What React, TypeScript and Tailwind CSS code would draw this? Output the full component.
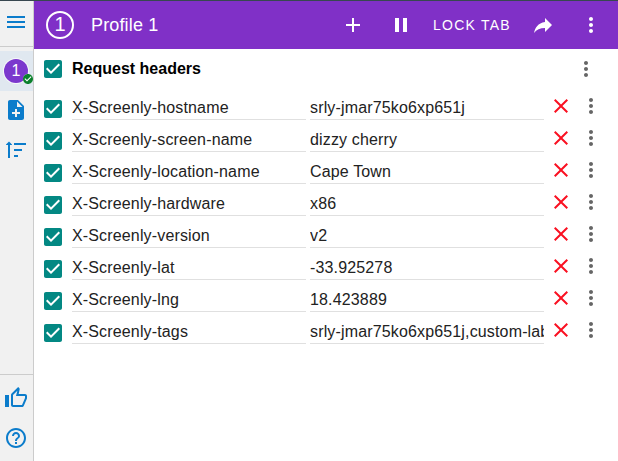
import React from 'react';

const paths = {
  menu: 'M3 18h18v-2H3v2zm0-5h18v-2H3v2zm0-7v2h18V6H3z',
  noteAdd:
    'M14 2H6c-1.1 0-1.99.9-1.99 2L4 20c0 1.1.89 2 1.99 2H18c1.1 0 2-.9 2-2V8l-6-6zm2 14h-3v3h-2v-3H8v-2h3v-3h2v3h3v2zm-3-7V3.5L18.5 9H13z',
  sort: 'M6 7v13H4V7H2v-.5L5 3.5l3 3V7H6zM10 5h12v2H10V5zm0 6h8v2h-8v-2zm0 6h4v2h-4v-2z',
  thumb:
    'M9 21h9c.83 0 1.54-.5 1.84-1.22l3.02-7.05c.09-.23.14-.47.14-.73v-2c0-1.1-.9-2-2-2h-6.31l.95-4.57.03-.32c0-.41-.17-.79-.44-1.06L14.17 1 7.58 7.59C7.22 7.95 7 8.45 7 9v10c0 1.1.9 2 2 2zM9 9l4.34-4.34L12 10h9v2l-3 7H9V9zM1 9h4v12H1z',
  help: 'M11 18h2v-2h-2v2zm1-16C6.48 2 2 6.48 2 12s4.48 10 10 10 10-4.48 10-10S17.52 2 12 2zm0 18c-4.41 0-8-3.59-8-8s3.59-8 8-8 8 3.59 8 8-3.59 8-8 8zm0-14c-2.21 0-4 1.79-4 4h2c0-1.1.9-2 2-2s2 .9 2 2c0 2-3 1.75-3 5h2c0-2.25 3-2.5 3-5 0-2.21-1.79-4-4-4z',
  add: 'M19 13h-6v6h-2v-6H5v-2h6V5h2v6h6v2z',
  pause: 'M6 19h4V5H6v14zm8-14v14h4V5h-4z',
  share: 'M21 12l-7-7v4C7 10 4 15 3 20c2.5-3.5 6-5.1 11-5.1V19l7-7z',
  more: 'M12 8c1.1 0 2-.9 2-2s-.9-2-2-2-2 .9-2 2 .9 2 2 2zm0 2c-1.1 0-2 .9-2 2s.9 2 2 2 2-.9 2-2-.9-2-2-2zm0 6c-1.1 0-2 .9-2 2s.9 2 2 2 2-.9 2-2-.9-2-2-2z',
  close:
    'M19 6.41L17.59 5 12 10.59 6.41 5 5 6.41 10.59 12 5 17.59 6.41 19 12 13.41 17.59 19 19 17.59 13.41 12z',
  checkBox:
    'M19 3H5c-1.11 0-2 .9-2 2v14c0 1.1.89 2 2 2h14c1.11 0 2-.9 2-2V5c0-1.1-.89-2-2-2zm-9 14l-5-5 1.41-1.41L10 14.17l7.59-7.59L19 8l-9 9z',
  checkCircle:
    'M12 2C6.48 2 2 6.48 2 12s4.48 10 10 10 10-4.48 10-10S17.52 2 12 2zm-2 15l-5-5 1.41-1.41L10 14.17l7.59-7.59L19 8l-9 9z',
};

function Icon({ name, className = '' }: { name: keyof typeof paths; className?: string }) {
  return (
    <svg viewBox="0 0 24 24" fill="currentColor" className={`size-6 shrink-0 ${className}`}>
      <path d={paths[name]} />
    </svg>
  );
}

const headers = [
  ['X-Screenly-hostname', 'srly-jmar75ko6xp651j'],
  ['X-Screenly-screen-name', 'dizzy cherry'],
  ['X-Screenly-location-name', 'Cape Town'],
  ['X-Screenly-hardware', 'x86'],
  ['X-Screenly-version', 'v2'],
  ['X-Screenly-lat', '-33.925278'],
  ['X-Screenly-lng', '18.423889'],
  ['X-Screenly-tags', 'srly-jmar75ko6xp651j,custom-label'],
];

function Sidebar() {
  return (
    <nav className="flex w-[34px] shrink-0 flex-col border-r border-[#cccccc] bg-[#f1f1f1] text-[#0b7ccb]">
      <div className="flex h-[46px] shrink-0 border-b border-[#cccccc] pl-1 pt-[9px]">
        <Icon name="menu" />
      </div>
      <div className="mt-1 flex h-10 shrink-0 items-center bg-[#e0e8f0] pl-1">
        <div className="relative flex size-6 items-center justify-center rounded-full bg-[#7b38cd] text-base text-white ring-1 ring-white/70">
          1
          <span className="absolute left-[19px] top-[15px] size-[10px] rounded-full bg-white" />
          <Icon name="checkCircle" className="absolute left-[18px] top-[14px] size-3! text-[#0a802c]" />
        </div>
      </div>
      <Icon name="noteAdd" className="ml-1 mt-[7px]" />
      <Icon name="sort" className="ml-1 mt-4" />
      <div className="mt-auto flex h-[87px] shrink-0 flex-col border-t border-[#cccccc] pl-1 pt-[11px]">
        <Icon name="thumb" />
        <Icon name="help" className="mt-4" />
      </div>
    </nav>
  );
}

function Toolbar() {
  return (
    <header className="flex h-12 shrink-0 items-center bg-[#8030c7] pl-3 text-white">
      <div className="flex size-7 items-center justify-center rounded-full border-2 border-white pb-0.5 text-xl leading-none">
        1
      </div>
      <h1 className="ml-[17px] w-[250px] text-lg tracking-[0.15px]">Profile 1</h1>
      <Icon name="add" />
      <Icon name="pause" className="ml-6" />
      <span className="ml-5 w-[98px] whitespace-nowrap text-sm tracking-[1.25px]">LOCK TAB</span>
      <Icon name="share" />
      <Icon name="more" className="ml-6" />
    </header>
  );
}

function Check() {
  return (
    <span className="flex h-6 w-6 shrink-0">
      <Icon name="checkBox" className="text-[#038883]" />
    </span>
  );
}

export default function App() {
  return (
    <div className="flex h-[461px] w-[618px] flex-col overflow-hidden border-t border-[#37474f] bg-white font-['Liberation_Sans',Arial,sans-serif] text-[#222222]">
      <div className="flex min-h-0 flex-1">
        <Sidebar />
        <main className="flex min-w-0 flex-1 flex-col">
          <Toolbar />
          <section className="pl-[7px]">
            <div className="flex h-10 items-center">
              <Check />
              <h2 className="ml-[7px] w-[502px] text-base font-bold text-black">Request headers</h2>
              <Icon name="more" className="text-[#666666]" />
            </div>
            <div className="flex flex-col pt-[3px]">
              {headers.map(([name, value]) => (
                <div key={name} className="flex h-8 items-start">
                  <div className="pt-[5px]">
                    <Check />
                  </div>
                  <div className="ml-[7px] h-7 w-[234px] overflow-hidden whitespace-nowrap border-b border-[#e0e0e0] pt-1 text-base leading-[23px] tracking-[0.15px]">
                    {name}
                  </div>
                  <div className="ml-1 h-7 w-[234px] overflow-hidden whitespace-nowrap border-b border-[#e0e0e0] pt-1 text-base leading-[23px] tracking-[0.15px]">
                    {value}
                  </div>
                  <Icon name="close" className="ml-[5px] mt-0.5 text-[#fa1021]" />
                  <Icon name="more" className="ml-1.5 mt-0.5 text-[#666666]" />
                </div>
              ))}
            </div>
          </section>
        </main>
      </div>
    </div>
  );
}
